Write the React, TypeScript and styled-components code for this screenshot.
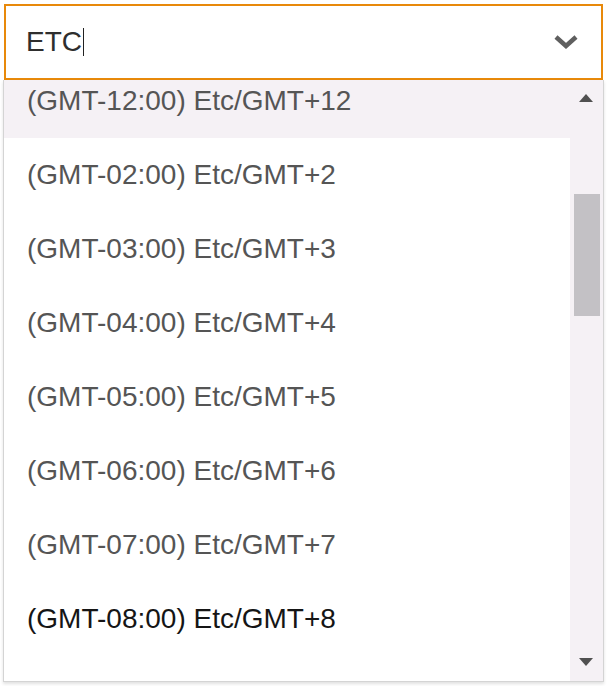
import React, { useLayoutEffect, useRef } from "react";
import styled, { createGlobalStyle } from "styled-components";

const Global = createGlobalStyle`
  html, body { margin: 0; padding: 0; background: #ffffff; }
  body { font-family: "Liberation Sans", Arial, Helvetica, sans-serif; }
  * { box-sizing: border-box; }
`;

const Page = styled.div`
  position: relative;
  width: 608px;
  height: 686px;
  overflow: hidden;
  padding: 4px 5px 0 4px;
`;

const SelectBox = styled.div`
  display: flex;
  align-items: center;
  height: 76px;
  border: 2px solid #e8890a;
  padding: 0 23px 0 20px;
  background: #ffffff;
`;

const Value = styled.div`
  flex: 1;
  display: flex;
  align-items: center;
  font-size: 28px;
  color: #2e2e2e;
`;

const Caret = styled.span`
  display: inline-block;
  width: 1px;
  height: 28px;
  margin-left: 1px;
  background: #222222;
`;

const Chevron = styled.svg`
  width: 24px;
  height: 14px;
  display: block;
`;

const Backdrop = styled.div`
  display: flex;
  flex-direction: column;
`;

const Band = styled.div<{ $gap: number; $h: number }>`
  margin-top: ${(p) => p.$gap}px;
  height: ${(p) => p.$h}px;
  background: #e4e4e4;
`;

const Panel = styled.div`
  position: absolute;
  top: 80px;
  left: 3px;
  width: 601px;
  height: 602px;
  border: 1px solid #d4d4d4;
  border-top: none;
  box-shadow: 0 2px 3px rgba(0, 0, 0, 0.12);
  background: #ffffff;
  display: flex;
`;

const List = styled.ul`
  flex: 1;
  margin: 0;
  padding: 0;
  list-style: none;
  overflow: hidden;

  &::after {
    content: "";
    display: block;
    height: 40px;
  }
`;

const Option = styled.li<{ $active?: boolean; $hover?: boolean }>`
  height: 74px;
  display: flex;
  align-items: center;
  padding-left: 23px;
  font-size: 28px;
  white-space: nowrap;
  color: ${(p) => (p.$hover ? "#151515" : "#555555")};
  background: ${(p) => (p.$active ? "#f5f1f5" : "#ffffff")};
`;

const ScrollBar = styled.div`
  width: 33px;
  display: flex;
  flex-direction: column;
  background: #f5f1f5;
`;

const ArrowButton = styled.div<{ $h: number }>`
  height: ${(p) => p.$h}px;
  display: flex;
  align-items: center;
  justify-content: center;
  padding-right: 1px;
`;

const Track = styled.div`
  flex: 1;
  display: flex;
  flex-direction: column;
`;

const Thumb = styled.div<{ $top: number }>`
  margin: ${(p) => p.$top}px 3px 0 4px;
  height: 122px;
  background: #c3c1c5;
`;

const Tri = styled.svg`
  width: 14px;
  height: 8px;
  display: block;
`;

const options = [
  "(GMT-12:00) Etc/GMT+12",
  "(GMT-02:00) Etc/GMT+2",
  "(GMT-03:00) Etc/GMT+3",
  "(GMT-04:00) Etc/GMT+4",
  "(GMT-05:00) Etc/GMT+5",
  "(GMT-06:00) Etc/GMT+6",
  "(GMT-07:00) Etc/GMT+7",
  "(GMT-08:00) Etc/GMT+8",
];

export default function App() {
  const listRef = useRef<HTMLUListElement>(null);
  useLayoutEffect(() => {
    if (listRef.current) listRef.current.scrollTop = 16;
  }, []);

  return (
    <>
      <Global />
      <Page>
        <SelectBox>
          <Value>
            ETC
            <Caret />
          </Value>
          <Chevron viewBox="0 0 24 14">
            <polyline points="2,2 12,11 22,2" fill="none" stroke="#5f5f5f" strokeWidth="4.5" />
          </Chevron>
        </SelectBox>
        <Backdrop>
          <Band $gap={67} $h={20} />
          <Band $gap={145} $h={30} />
        </Backdrop>
        <Panel>
          <List ref={listRef}>
            {options.map((o, i) => (
              <Option key={o} $active={i === 0} $hover={i === 7}>
                {o}
              </Option>
            ))}
          </List>
          <ScrollBar>
            <ArrowButton $h={36}>
              <Tri viewBox="0 0 14 8">
                <polygon points="7,0 14,8 0,8" fill="#505050" />
              </Tri>
            </ArrowButton>
            <Track>
              <Thumb $top={78} />
            </Track>
            <ArrowButton $h={39}>
              <Tri viewBox="0 0 14 8">
                <polygon points="0,0 14,0 7,8" fill="#505050" />
              </Tri>
            </ArrowButton>
          </ScrollBar>
        </Panel>
      </Page>
    </>
  );
}
